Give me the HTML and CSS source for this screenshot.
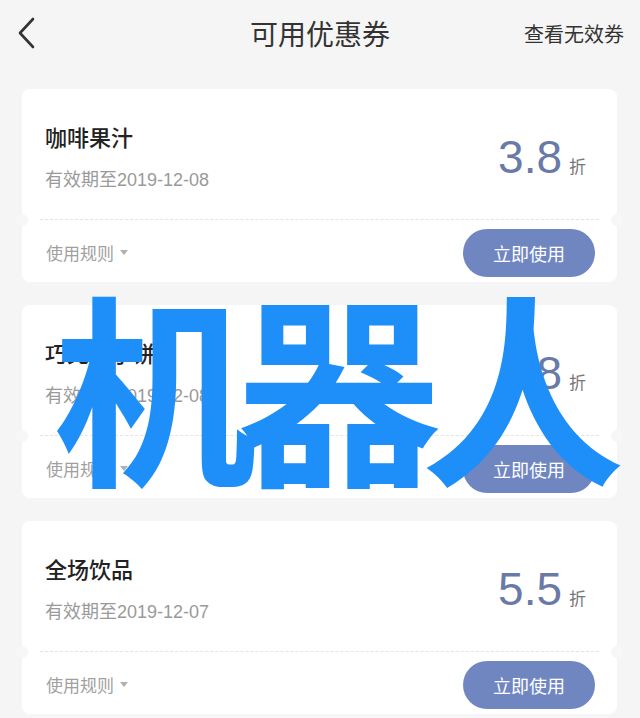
FILE: index.html
```html
<!DOCTYPE html>
<html lang="zh-CN">
<head>
    <meta charset="UTF-8">
    <meta name="viewport" content="width=device-width, initial-scale=1.0">
    <title>可用优惠券</title>
    <link rel="stylesheet" href="styles.css">
</head>
<body>

<div class="topbar">
    <svg class="back" width="20" height="32" viewBox="0 0 20 32">
        <path d="M16 2 L3 16 L16 30" fill="none" stroke="#333" stroke-width="2.6" stroke-linecap="round" stroke-linejoin="round"/>
    </svg>
    <div class="title">可用优惠券</div>
    <div class="invalid">查看无效券</div>
</div>

<div class="list">
    <div class="coupon">
        <div class="coupon-top">
            <div class="info">
                <div class="name">咖啡果汁</div>
                <div class="date">有效期至2019-12-08</div>
            </div>
            <div class="value"><span class="num">3.8</span><span class="unit">折</span></div>
        </div>
        <div class="coupon-bottom">
            <div class="rules">使用规则 <span class="arrow"></span></div>
            <div class="use-btn">立即使用</div>
        </div>
    </div>

    <div class="coupon">
        <div class="coupon-top">
            <div class="info">
                <div class="name">巧克力小饼</div>
                <div class="date">有效期至2019-12-08</div>
            </div>
            <div class="value"><span class="num">4.8</span><span class="unit">折</span></div>
        </div>
        <div class="coupon-bottom">
            <div class="rules">使用规则 <span class="arrow"></span></div>
            <div class="use-btn">立即使用</div>
        </div>
    </div>

    <div class="coupon">
        <div class="coupon-top">
            <div class="info">
                <div class="name">全场饮品</div>
                <div class="date">有效期至2019-12-07</div>
            </div>
            <div class="value"><span class="num">5.5</span><span class="unit">折</span></div>
        </div>
        <div class="coupon-bottom">
            <div class="rules">使用规则 <span class="arrow"></span></div>
            <div class="use-btn">立即使用</div>
        </div>
    </div>
</div>

<div class="stamp">机器人</div>

</body>
</html>
```

FILE: styles.css
```css
body {
    margin: 0;
    background-color: #f5f5f5;
    font-family: "Liberation Sans", "Noto Sans CJK SC", sans-serif;
    color: #222;
    position: relative;
    overflow: hidden;
    height: 718px;
}
.topbar {
    display: flex;
    align-items: center;
    justify-content: space-between;
    height: 66px;
    padding: 0 16px 0 16px;
    position: relative;
}
.back {
    margin-left: 1px;
}
.title {
    position: absolute;
    left: 0;
    right: 0;
    text-align: center;
    font-size: 28px;
    color: #333;
    font-family: "Noto Sans CJK SC", sans-serif;
    pointer-events: none;
}
.invalid {
    font-size: 20px;
    color: #333;
    font-family: "Noto Sans CJK SC", sans-serif;
}
.list {
    display: flex;
    flex-direction: column;
    gap: 23px;
    padding: 23px 23px 0 22px;
}
.coupon {
    background-color: #fff;
    border-radius: 8px;
    height: 193px;
    display: flex;
    flex-direction: column;
    position: relative;
    flex-shrink: 0;
}
.coupon-top {
    height: 131px;
    display: flex;
    align-items: center;
    justify-content: space-between;
    padding: 0 31px 0 23px;
    position: relative;
}
.coupon-top::after {
    content: "";
    position: absolute;
    left: 18px;
    right: 18px;
    bottom: 0;
    border-top: 1px dashed #e4e4e4;
}
.coupon::before,
.coupon::after {
    content: "";
    position: absolute;
    top: 125px;
    width: 12px;
    height: 12px;
    border-radius: 50%;
    background-color: #f7f7f7;
}
.coupon::before {
    left: -6px;
}
.coupon::after {
    right: -6px;
}
.info {
    padding-top: 3px;
}
.name {
    font-size: 22px;
    font-weight: 500;
    font-family: "Noto Sans CJK SC", sans-serif;
    color: #222;
    line-height: 32px;
}
.date {
    font-size: 18px;
    color: #9a9a9a;
    margin-top: 16px;
    line-height: 24px;
}
.value {
    display: flex;
    align-items: baseline;
    color: #6a7aa6;
    padding-top: 4px;
}
.num {
    font-size: 46px;
}
.unit {
    font-size: 17px;
    margin-left: 7px;
    color: #777;
    font-family: "Noto Sans CJK SC", sans-serif;
}
.coupon-bottom {
    flex: 1;
    display: flex;
    align-items: center;
    justify-content: space-between;
    padding: 3px 22px 0 24px;
}
.rules {
    font-size: 17px;
    color: #a0a0a0;
    font-family: "Noto Sans CJK SC", sans-serif;
    display: flex;
    align-items: center;
    gap: 4px;
}
.arrow {
    display: inline-block;
    width: 0;
    height: 0;
    border-left: 4px solid transparent;
    border-right: 4px solid transparent;
    border-top: 5px solid #b0b0b0;
    margin-left: 2px;
}
.use-btn {
    width: 132px;
    height: 48px;
    border-radius: 24px;
    background-color: #6f86c1;
    color: #fff;
    font-size: 18px;
    font-family: "Noto Sans CJK SC", sans-serif;
    display: flex;
    align-items: center;
    justify-content: center;
}
.stamp {
    position: absolute;
    left: 53px;
    top: 280px;
    font-size: 204px;
    line-height: 1;
    font-weight: 700;
    color: #1e8ff8;
    font-family: "Noto Sans CJK SC", sans-serif;
    white-space: nowrap;
    letter-spacing: -20px;
}
```
